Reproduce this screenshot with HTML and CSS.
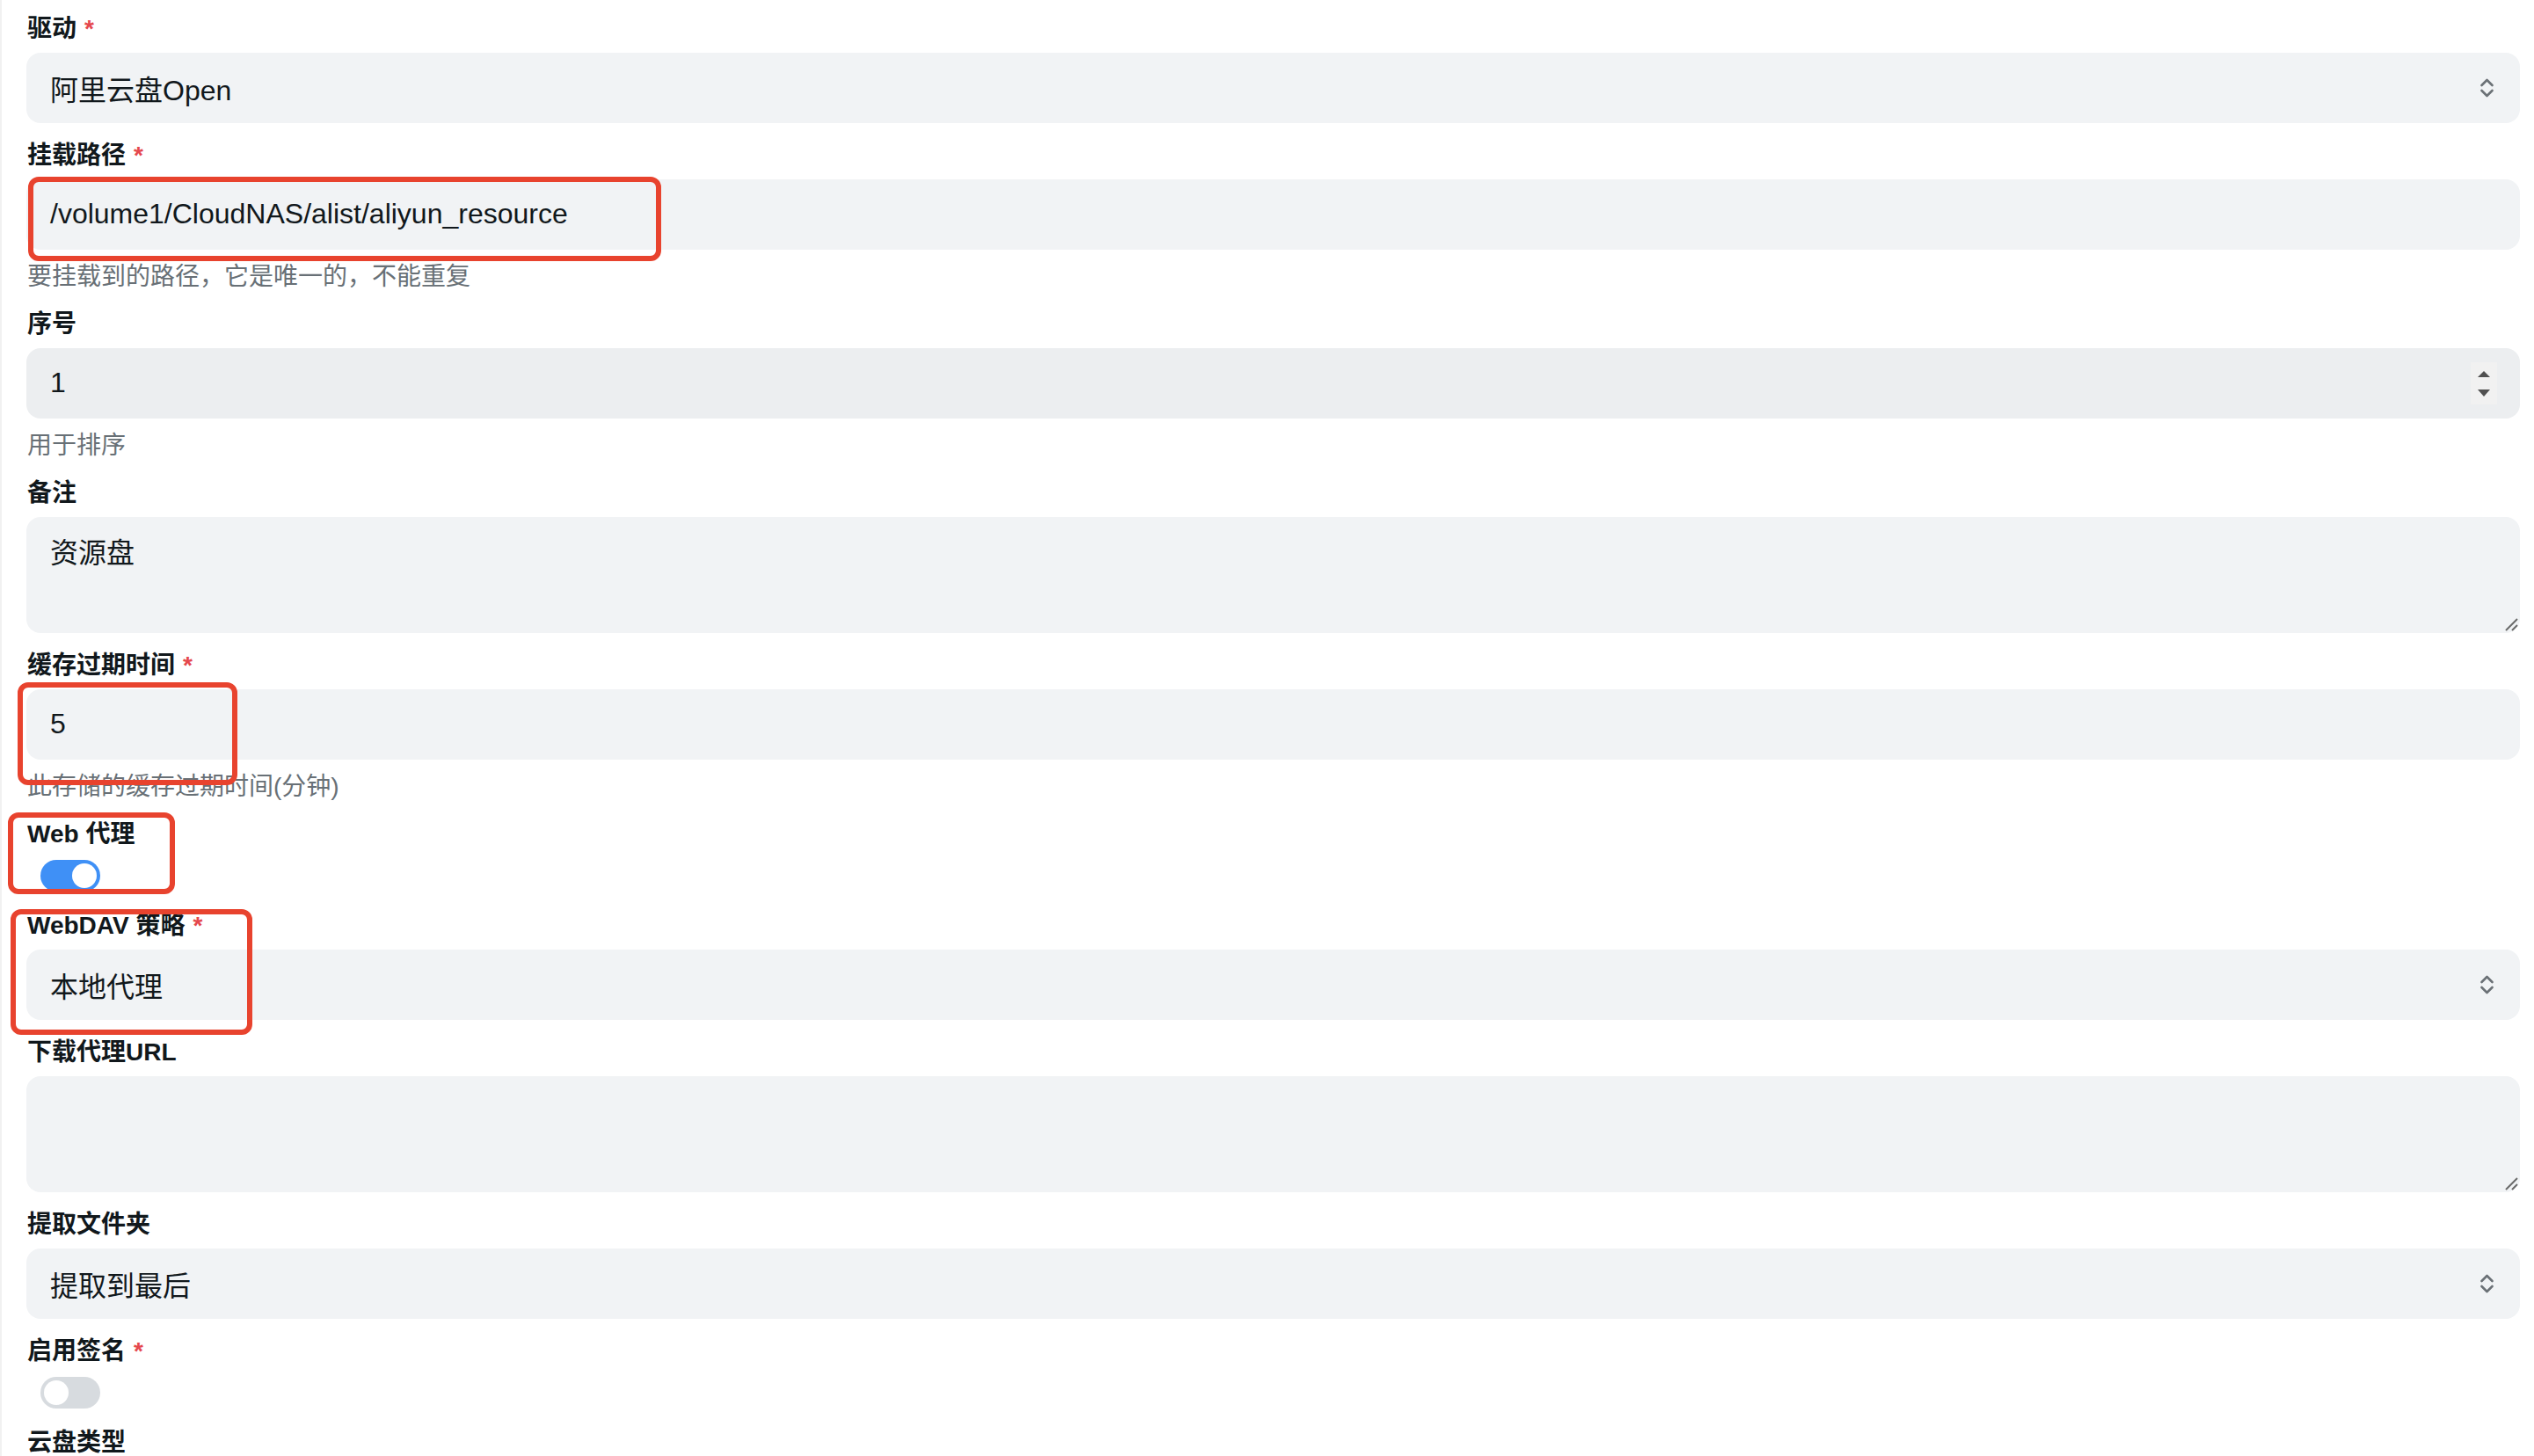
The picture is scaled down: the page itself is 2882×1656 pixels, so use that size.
FILE: index.html
```html
<!DOCTYPE html>
<html lang="zh-CN">
<head>
<meta charset="utf-8">
<title>存储设置</title>
<link rel="stylesheet" href="styles.css">
</head>
<body>
<main class="form">
  <div class="control">
    <div class="label">驱动<span class="req">*</span></div>
    <div class="field">
      <span class="value">阿里云盘Open</span>
      <svg class="chev" viewBox="0 0 15 24" width="15" height="24"><path d="M1.5 9 L7.5 3 L13.5 9 M1.5 15 L7.5 21 L13.5 15" fill="none" stroke="#6b7176" stroke-width="2.6" stroke-linecap="round" stroke-linejoin="round"/></svg>
    </div>
  </div>

  <div class="control">
    <div class="label">挂载路径<span class="req">*</span></div>
    <div class="field"><span class="value">/volume1/CloudNAS/alist/aliyun_resource</span></div>
    <div class="help">要挂载到的路径，它是唯一的，不能重复</div>
  </div>

  <div class="control">
    <div class="label">序号</div>
    <div class="field number">
      <span class="value">1</span>
      <div class="spinner">
        <svg viewBox="0 0 14 7" width="14" height="7"><path d="M0 7 L7 0 L14 7 Z" fill="#505050"/></svg>
        <svg viewBox="0 0 14 8" width="14" height="8"><path d="M0 0 L14 0 L7 8 Z" fill="#505050"/></svg>
      </div>
    </div>
    <div class="help">用于排序</div>
  </div>

  <div class="control">
    <div class="label">备注</div>
    <div class="field area">
      <span class="value">资源盘</span>
      <svg class="grip" viewBox="0 0 16 16" width="16" height="16"><path d="M2 15 L15 2 M9 15 L15 9" stroke="#6b6b6b" stroke-width="2" fill="none"/></svg>
    </div>
  </div>

  <div class="control">
    <div class="label">缓存过期时间<span class="req">*</span></div>
    <div class="field"><span class="value">5</span></div>
    <div class="help">此存储的缓存过期时间(分钟)</div>
  </div>

  <div class="control">
    <div class="label">Web 代理</div>
    <div class="switch-row"><span class="switch on"><span class="thumb"></span></span></div>
  </div>

  <div class="control">
    <div class="label">WebDAV 策略<span class="req">*</span></div>
    <div class="field">
      <span class="value">本地代理</span>
      <svg class="chev" viewBox="0 0 15 24" width="15" height="24"><path d="M1.5 9 L7.5 3 L13.5 9 M1.5 15 L7.5 21 L13.5 15" fill="none" stroke="#6b7176" stroke-width="2.6" stroke-linecap="round" stroke-linejoin="round"/></svg>
    </div>
  </div>

  <div class="control">
    <div class="label">下载代理URL</div>
    <div class="field area">
      <span class="value"></span>
      <svg class="grip" viewBox="0 0 16 16" width="16" height="16"><path d="M2 15 L15 2 M9 15 L15 9" stroke="#6b6b6b" stroke-width="2" fill="none"/></svg>
    </div>
  </div>

  <div class="control">
    <div class="label">提取文件夹</div>
    <div class="field">
      <span class="value">提取到最后</span>
      <svg class="chev" viewBox="0 0 15 24" width="15" height="24"><path d="M1.5 9 L7.5 3 L13.5 9 M1.5 15 L7.5 21 L13.5 15" fill="none" stroke="#6b7176" stroke-width="2.6" stroke-linecap="round" stroke-linejoin="round"/></svg>
    </div>
  </div>

  <div class="control">
    <div class="label">启用签名<span class="req">*</span></div>
    <div class="switch-row"><span class="switch"><span class="thumb"></span></span></div>
  </div>

  <div class="control">
    <div class="label">云盘类型</div>
  </div>
</main>

<div class="mark mark-path"></div>
<div class="mark mark-cache"></div>
<div class="mark mark-web"></div>
<div class="mark mark-dav"></div>
</body>
</html>
```

FILE: styles.css
```css
html, body {
  margin: 0;
  padding: 0;
  background: #ffffff;
}

body {
  position: relative;
  border-left: 2px solid #f1f1f1;
  font-family: "Liberation Sans", "Noto Sans CJK SC", sans-serif;
  color: #11181c;
  overflow: hidden;
  height: 1656px;
}

.form {
  display: flex;
  flex-direction: column;
  gap: 16px;
  padding: 12px 16px 0 28px;
}

.control {
  display: flex;
  flex-direction: column;
}

.label {
  display: flex;
  align-items: center;
  font-size: 28px;
  line-height: 40px;
  font-weight: 600;
  padding-top: 1px;
  margin-bottom: 7px;
  padding-left: 1px;
  color: #11181c;
}

.req {
  color: #e5484d;
  margin-left: 9px;
  font-weight: 600;
}

.field {
  display: flex;
  align-items: center;
  height: 80px;
  box-sizing: border-box;
  background: #f1f3f5;
  border-radius: 16px;
  padding: 0 26px 1px 27px;
  font-size: 32px;
  color: #11181c;
  position: relative;
}

.value {
  flex: 1;
  white-space: nowrap;
}

.chev {
  margin-right: 4px;
  margin-top: 1px;
  flex: none;
}

.number {
  background: #eceef0;
}

.spinner {
  width: 30px;
  height: 48px;
  margin-top: 1px;
  background: #f1f1f1;
  display: flex;
  flex-direction: column;
  align-items: center;
  justify-content: center;
  gap: 14px;
}

.spinner svg {
  display: block;
}

.area {
  height: 132px;
  align-items: flex-start;
  padding-top: 17px;
  line-height: 48px;
}

.grip {
  position: absolute;
  right: 2px;
  bottom: 2px;
}

.help {
  margin-top: 11px;
  margin-bottom: -3px;
  font-size: 28px;
  line-height: 40px;
  color: #687076;
  padding-left: 1px;
}

.switch-row {
  height: 40px;
  display: flex;
  align-items: center;
  padding-left: 16px;
}

.switch {
  width: 68px;
  height: 36px;
  border-radius: 18px;
  background: #d7dbdf;
  box-sizing: border-box;
  padding: 4px;
  display: flex;
  justify-content: flex-start;
}

.switch.on {
  background: #3f90f6;
  justify-content: flex-end;
}

.thumb {
  width: 28px;
  height: 28px;
  border-radius: 50%;
  background: #ffffff;
}

.mark {
  position: absolute;
  border: 6px solid #e8432e;
  border-radius: 12px;
  box-sizing: border-box;
  pointer-events: none;
}

.mark-path {
  left: 30px;
  top: 201px;
  width: 720px;
  height: 96px;
}

.mark-cache {
  left: 18px;
  top: 776px;
  width: 250px;
  height: 117px;
}

.mark-web {
  left: 7px;
  top: 924px;
  width: 190px;
  height: 93px;
}

.mark-dav {
  left: 10px;
  top: 1034px;
  width: 275px;
  height: 143px;
}
```
